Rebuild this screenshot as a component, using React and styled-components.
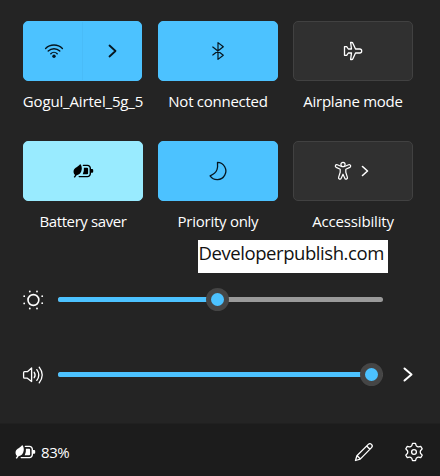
import React from 'react';
import styled, { createGlobalStyle } from 'styled-components';

const GlobalStyle = createGlobalStyle`
  * { box-sizing: border-box; }
  body { margin: 0; background: #242424; overflow: hidden; }
`;

const Panel = styled.main`
  position: relative;
  display: flex;
  flex-direction: column;
  width: 440px;
  height: 476px;
  background: #242424;
  color: #fff;
  font-family: "Open Sans", "Noto Sans", sans-serif;
`;

const TileGrid = styled.section`
  display: grid;
  grid-template-columns: repeat(3, 120px);
  grid-auto-rows: 120px;
  column-gap: 15px;
  padding: 21px 0 0 23px;
  height: 262px;
`;

const TileCell = styled.div`
  display: flex;
  flex-direction: column;
  align-items: center;
`;

const tones = {
  on: { bg: '#4cc2ff', ink: '#061620', edge: '#4cc2ff' },
  bright: { bg: '#99ebff', ink: '#000', edge: '#99ebff' },
  off: { bg: '#303030', ink: '#fff', edge: '#414141' },
};

const Tile = styled.button`
  display: flex;
  align-items: center;
  justify-content: center;
  gap: ${(p) => p.$gap || 0}px;
  align-self: flex-start;
  width: ${(p) => p.$width || 120}px;
  height: 60px;
  padding: 0 ${(p) => p.$inset || 0}px 0 0;
  border: 1px solid ${(p) => tones[p.$tone].edge};
  border-radius: 5px;
  background: ${(p) => tones[p.$tone].bg};
  color: ${(p) => tones[p.$tone].ink};
`;

const TileHalf = styled.span`
  display: flex;
  align-items: center;
  justify-content: center;
  width: ${(p) => p.$width}px;
  height: 100%;
  padding-left: ${(p) => p.$inset || 0}px;
  border-left: ${(p) => (p.$divided ? '1px solid #49bcf8' : 'none')};
`;

const TileLabel = styled.span`
  width: 121px;
  margin-top: 9px;
  overflow: hidden;
  white-space: nowrap;
  text-align: center;
  font-size: 15px;
  line-height: 22px;
  letter-spacing: ${(p) => p.$track}px;
`;

const Watermark = styled.div`
  position: absolute;
  left: 198px;
  top: 240px;
  width: 190px;
  height: 33px;
  padding-left: 0.5px;
  background: #fff;
  color: #111;
  font-family: "Open Sans", sans-serif;
  font-size: 18.5px;
  line-height: 26px;
  letter-spacing: -0.43px;
  white-space: nowrap;
`;

const SliderRow = styled.div`
  display: flex;
  align-items: center;
  height: 75px;
  padding-left: 22px;
`;

const SliderIcon = styled.span`
  display: flex;
  width: 36px;
`;

const Track = styled.div`
  display: flex;
  align-items: center;
  width: 325px;
  height: 5px;
  border-radius: 3px;
  background: #9a9a9a;
`;

const Fill = styled.div`
  flex: none;
  width: ${(p) => p.$width}px;
  height: 5px;
  border-radius: 3px 0 0 3px;
  background: #4cc2ff;
`;

const Thumb = styled.div`
  flex: none;
  width: 23px;
  height: 23px;
  margin-left: -11.5px;
  border: 5px solid #454545;
  border-radius: 50%;
  background: #4cc2ff;
`;

const MoreButton = styled.span`
  display: flex;
  margin-left: 21px;
`;

const Footer = styled.footer`
  display: flex;
  align-items: center;
  height: 53px;
  margin-top: auto;
  padding: 4px 16px 0 15px;
  border-top: 1px solid #202020;
  background: #1c1c1c;
`;

const Percent = styled.span`
  margin-left: 5px;
  font-size: 15px;
  line-height: 20px;
  letter-spacing: -0.4px;
`;

const FooterActions = styled.div`
  display: flex;
  gap: 30px;
  margin-left: auto;
`;

const Glyph = styled.svg`
  display: block;
  flex: none;
  overflow: visible;
  fill: none;
  stroke: currentColor;
  stroke-width: ${(p) => p.$weight || 1.3};
  stroke-linecap: round;
  stroke-linejoin: round;
`;

const Icon = ({ w = 20, h = 20, weight, children }) => (
  <Glyph width={w} height={h} viewBox={`0 0 ${w} ${h}`} $weight={weight} aria-hidden="true">
    {children}
  </Glyph>
);

const Wifi = () => (
  <Icon weight={1.4}>
    <path d="M1.6 7.4C6.2 2.8 13.8 2.8 18.4 7.4M4.2 10.1c3.2-3.2 8.4-3.2 11.6 0M6.8 12.7c1.8-1.8 4.6-1.8 6.4 0" />
    <circle cx="10" cy="15.2" r="1.7" fill="currentColor" stroke="none" />
  </Icon>
);

const Chevron = ({ w = 7, h = 12, weight = 1.8 }) => (
  <Icon w={w} h={h} weight={weight}>
    <path d={`M.5 .5 L${w - 0.5} ${h / 2} L.5 ${h - 0.5}`} />
  </Icon>
);

const Bluetooth = () => (
  <Icon weight={1.2}>
    <path d="M4.8 6 15.3 14.2 10 18.4V1.6l5.3 4.2L4.8 14" />
  </Icon>
);

const Airplane = () => (
  <Icon>
    <path d="M12.5 8h4.2a2 2 0 0 1 0 4h-4.2l-2.6 5.7a1.3 1.3 0 0 1-1.2.8H7.6L8.5 12H5.3l-1.6 2.3H1.5V5.7h2.2L5.3 8h3.2L7.6 1.5h1.1a1.3 1.3 0 0 1 1.2.8z" />
  </Icon>
);

const BatteryLeaf = () => (
  <Icon w={21} h={16} weight={1.4}>
    <path d="M10.4 2.4H14.5a2.8 2.8 0 0 1 2.8 2.8v5.6a2.8 2.8 0 0 1-2.8 2.8H6.2" />
    <path d="M18 6h1.2q1 0 1 1v1.8q0 1-1 1H18z" fill="currentColor" stroke="none" />
    <path d="M10.9 4.8h3.2q1 0 1 1v4.4q0 1-1 1H9.7q1.6-3.2 1.2-6.4z" fill="currentColor" stroke="none" />
    <path d="M7.2.9C8.7 2.5 9 4.6 8.7 6.6 8.3 9.8 6.4 12 3.6 12.2L1.9 14.8.7 14 2.1 12C.6 10.8.2 8.7.8 7 1.7 4.7 5.4 3.6 7.2.9z" fill="currentColor" stroke="none" />
  </Icon>
);

const Moon = () => (
  <Icon>
    <path d="M9.5 1.4a8.6 8.6 0 1 1-7.4 13.4C5.6 13.3 8 11.4 9 8.6c.8-2.2.7-4.7.5-7.2z" />
  </Icon>
);

const Person = () => (
  <Icon w={18} h={20} weight={1.2}>
    <circle cx="9" cy="3.4" r="2.1" />
    <path d="M6.9 5.3 3.3 3.8a1.4 1.4 0 0 0-1.1 2.6l4 1.8v3.1l-1.6 5.1a1.35 1.35 0 0 0 2.6.8L9 13.2l1.8 4a1.35 1.35 0 0 0 2.6-.8l-1.6-5.1V8.2l4-1.8a1.4 1.4 0 0 0-1.1-2.6l-3.6 1.5q-2.1.9-4.2 0z" />
  </Icon>
);

const sunDots = [[2.2, 6.2], [2.2, 13.4], [7.8, 1.5], [15, 1.5], [20.2, 6.2], [20.2, 13.2], [7.8, 18.5], [15, 18.5]];

const Sun = () => (
  <Icon w={22} h={20} weight={1.6}>
    <circle cx="11.4" cy="10" r="5.4" />
    {sunDots.map(([x, y]) => (
      <circle key={`${x}-${y}`} cx={x} cy={y} r=".9" fill="currentColor" stroke="none" />
    ))}
  </Icon>
);

const Volume = () => (
  <Icon w={22} h={20}>
    <path d="M1.6 7.7q0-1 1-1h2.8L9.6 2.9V16.6L5.4 13.2H2.6q-1 0-1-1z" />
    <path d="M12.2 7.3q1.8 2.8 0 5.4M14.8 4.6q4 5.4 0 10.8M17.2 2.2q6 7.8 0 15.6" />
  </Icon>
);

const Pencil = () => (
  <Icon weight={1.3}>
    <path d="m1.5 18.5 1.4-4.7L14.3 2.4a2.2 2.2 0 0 1 3.2 3.2L6.2 17.1zM12.7 4l3.2 3.2M3.1 13.7l3.1 3.1" />
  </Icon>
);

const Gear = () => (
  <Icon weight={1.3}>
    <path d="M8.5 1.4h3l.7 2.2q.2.6.9.8l.5.3q.6.3 1.1.2l2-.6 1.5 2.6-1.5 1.6q-.4.5-.4 1v1q0 .5.4 1l1.5 1.6-1.5 2.6-2-.6q-.5-.1-1.1.2l-.5.3q-.7.2-.9.8l-.7 2.2h-3l-.7-2.2q-.2-.6-.9-.8l-.5-.3q-.6-.3-1.1-.2l-2 .6-1.5-2.6 1.5-1.6q.4-.5.4-1v-1q0-.5-.4-1L1.8 6.9l1.5-2.6 2 .6q.5.1 1.1-.2l.5-.3q.7-.2.9-.8z" />
    <circle cx="10" cy="10" r="2.4" />
  </Icon>
);

const tiles = [
  { label: 'Not connected', tone: 'on', icon: <Bluetooth />, track: -0.26 },
  { label: 'Airplane mode', tone: 'off', icon: <Airplane />, track: -0.26 },
  { label: 'Battery saver', tone: 'bright', icon: <BatteryLeaf />, track: -0.4 },
  { label: 'Priority only', tone: 'on', icon: <Moon />, track: -0.26 },
];

export default function App() {
  return (
    <>
      <GlobalStyle />
      <Panel>
        <TileGrid>
          <TileCell>
            <Tile $tone="on" $width={119}>
              <TileHalf $width={58} $inset={2}><Wifi /></TileHalf>
              <TileHalf $width={59} $inset={1} $divided><Chevron /></TileHalf>
            </Tile>
            <TileLabel $track={-0.16}>Gogul_Airtel_5g_5</TileLabel>
          </TileCell>
          {tiles.map((t) => (
            <TileCell key={t.label}>
              <Tile $tone={t.tone}>{t.icon}</Tile>
              <TileLabel $track={t.track}>{t.label}</TileLabel>
            </TileCell>
          ))}
          <TileCell>
            <Tile $tone="off" $gap={10} $inset={4}>
              <Person />
              <Chevron w={6} h={10} weight={1.6} />
            </Tile>
            <TileLabel $track={-0.16}>Accessibility</TileLabel>
          </TileCell>
        </TileGrid>

        <Watermark>Developerpublish.com</Watermark>

        <SliderRow>
          <SliderIcon><Sun /></SliderIcon>
          <Track><Fill $width={159.5} /><Thumb /></Track>
        </SliderRow>
        <SliderRow>
          <SliderIcon><Volume /></SliderIcon>
          <Track><Fill $width={313.5} /><Thumb /></Track>
          <MoreButton><Chevron w={8} h={13} weight={2} /></MoreButton>
        </SliderRow>

        <Footer>
          <BatteryLeaf />
          <Percent>83%</Percent>
          <FooterActions>
            <Pencil />
            <Gear />
          </FooterActions>
        </Footer>
      </Panel>
    </>
  );
}
